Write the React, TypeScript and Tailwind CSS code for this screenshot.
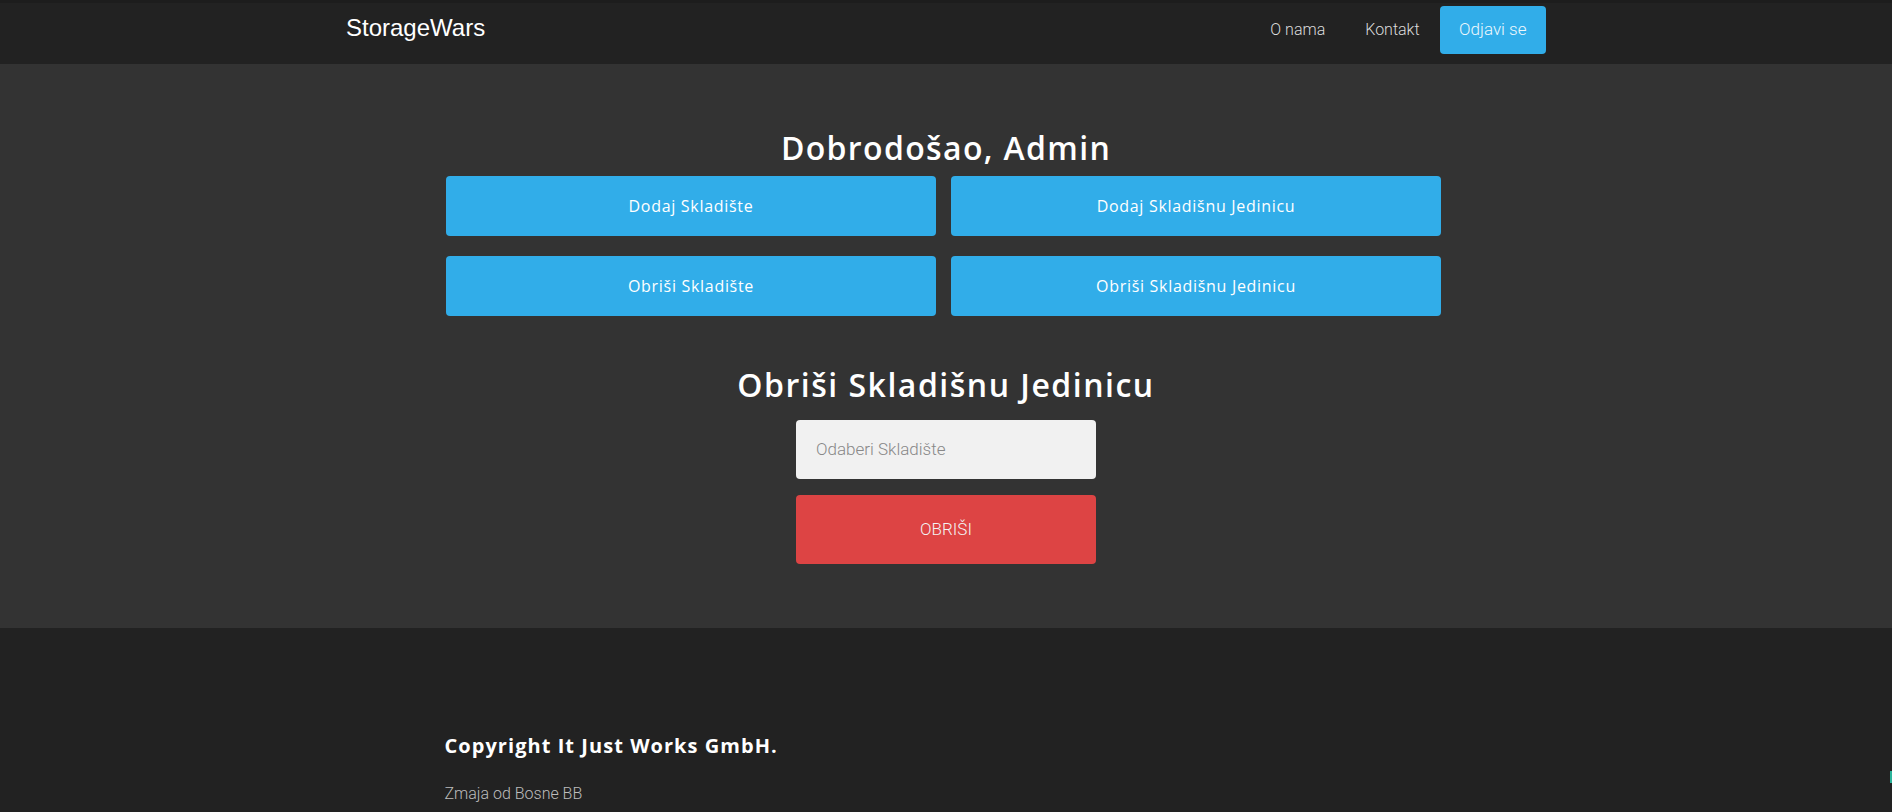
import React from "react";

const heading = "font-['Open_Sans',_'Noto_Sans',_sans-serif]";
const body = "font-['Roboto',_'Liberation_Sans',_sans-serif]";

function AdminButton({ label }: { label: string }) {
  return (
    <button className={`h-[60px] rounded-[4px] bg-[#31ade9] text-white text-[16px] tracking-[0.7px] ${heading}`}>
      {label}
    </button>
  );
}

export default function App() {
  return (
    <div className="min-h-[812px] bg-[#222] relative">
      <nav className="h-[64px] bg-[#222] border-t-[3px] border-[#1d1d1d]">
        <div className="w-[1200px] mx-auto flex justify-between items-start">
          <a className="text-white text-[24px] pt-[7px] font-['Liberation_Sans',_Arial,_sans-serif]">StorageWars</a>
          <div className={`flex items-center pt-[3px] text-[16px] font-light ${body}`}>
            <a className="px-[20px] text-[#dcdcdc]">O nama</a>
            <a className="pl-[20px] pr-[19px] text-[#dcdcdc]">Kontakt</a>
            <button className="ml-[1px] h-[48px] px-[19.5px] rounded-[4px] bg-[#31ade9] text-[#eef8fd] text-[17px] font-light">
              Odjavi se
            </button>
          </div>
        </div>
      </nav>

      <main className="bg-[#333] pt-[65px] pb-[64px] flex flex-col items-center">
        <h1 className={`text-white text-[32px] font-semibold leading-[38px] tracking-[1.35px] ${heading}`}>
          Dobrodošao, Admin
        </h1>
        <div className="mt-[9px] mr-[5px] w-[995px] grid grid-cols-2 gap-x-[15px] gap-y-[20px]">
          <AdminButton label="Dodaj Skladište" />
          <AdminButton label="Dodaj Skladišnu Jedinicu" />
          <AdminButton label="Obriši Skladište" />
          <AdminButton label="Obriši Skladišnu Jedinicu" />
        </div>

        <h2 className={`mt-[50px] text-white text-[32px] font-semibold leading-[38px] tracking-[1.5px] ${heading}`}>
          Obriši Skladišnu Jedinicu
        </h2>
        <div className="mt-[16px] w-[300px] flex flex-col gap-[16px]">
          <div className={`h-[59px] rounded-[4px] bg-[#f1f1f1] pl-[20px] flex items-center text-[17px] font-light text-[#888] ${body}`}>
            Odaberi Skladište
          </div>
          <button className={`h-[69px] rounded-[4px] bg-[#dd4444] text-[#f3f3f3] text-[17px] font-light ${body}`}>
            OBRIŠI
          </button>
        </div>
      </main>

      <footer className="bg-[#222] pt-[104px] pb-[40px]">
        <div className="w-[995px] mx-auto pr-[5px]">
          <div className="ml-[-4px]">
            <h3 className={`text-white text-[20px] font-bold tracking-[1.05px] leading-[28px] ${heading}`}>
              Copyright It Just Works GmbH.
            </h3>
            <p className={`mt-[22px] text-[#bdbdbd] text-[16px] font-light ${body}`}>Zmaja od Bosne BB</p>
          </div>
        </div>
      </footer>

      <div className="absolute right-0 top-[771px] w-[2px] h-[12px] bg-[#2bb39a]" />
    </div>
  );
}
